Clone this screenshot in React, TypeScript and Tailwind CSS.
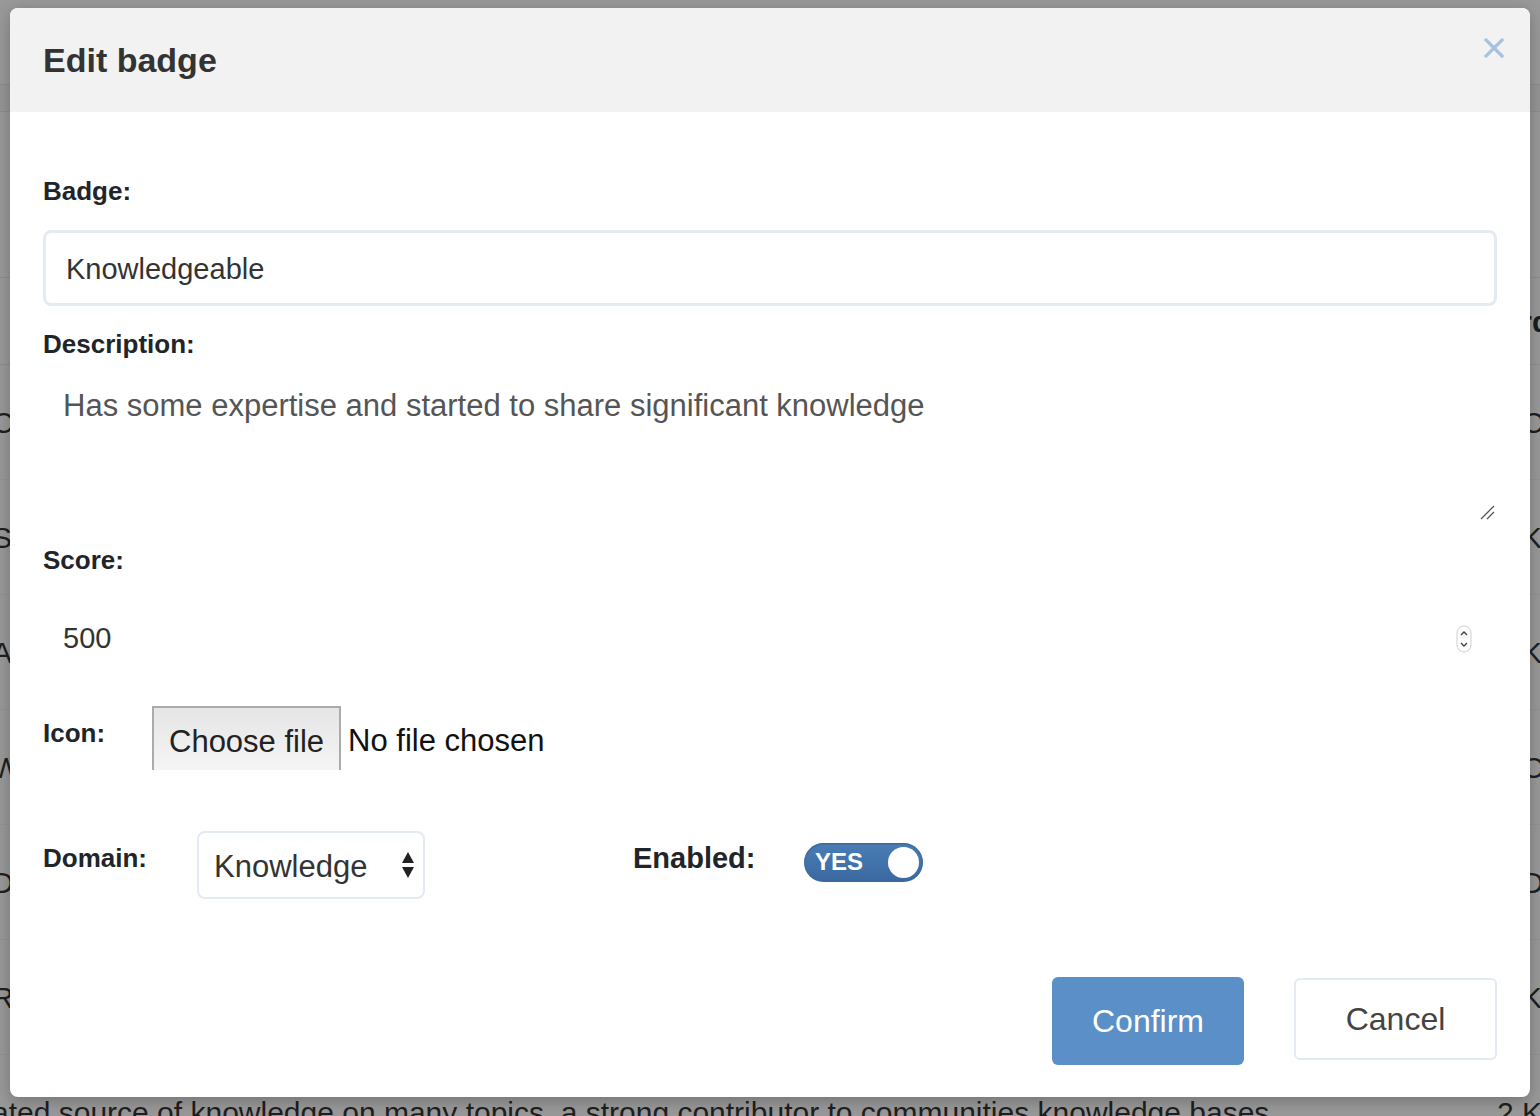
import { useState } from "react";

const FONT = "font-['Liberation_Sans',Arial,sans-serif]";

const ROWS = [
  { desc: "Contributes often and helps the community grow", right: "1 Community" },
  { desc: "Shares expertise in a clear and useful manner", right: "2 Knowledge" },
  { desc: "Answers questions in depth with good explanation", right: "2 Knowledge" },
  { desc: "Welcomes new members and encourages discussion", right: "1 Community" },
  { desc: "Default badge given on first sign in", right: "0 Default" },
  { desc: "Recognised for knowledge on a wide range of topic", right: "3 Knowledge" },
  { desc: "ated source of knowledge on many topics, a strong contributor to communities knowledge bases", right: "2 Knowledge" },
];

function Spinner() {
  return (
    <svg width="16" height="28" viewBox="0 0 16 28" className="shrink-0">
      <rect x="1" y="1" width="14" height="26" rx="7" fill="#fff" stroke="#cfcfcf" />
      <path d="M5 10 L8 7 L11 10" fill="none" stroke="#444" strokeWidth="1.4" />
      <path d="M5 18 L8 21 L11 18" fill="none" stroke="#444" strokeWidth="1.4" />
    </svg>
  );
}

function Toggle({ on }: { on: boolean }) {
  return (
    <div className="flex h-[39px] w-[119px] items-center justify-between rounded-full bg-gradient-to-b from-[#4a7db6] to-[#3a699f] pl-[11px] pr-[4px] shadow-[inset_0_1px_2px_rgba(0,0,0,0.25)]">
      <span className="text-[24px] font-bold leading-none text-white">{on ? "YES" : "NO"}</span>
      <span className="h-[31px] w-[31px] rounded-full bg-white" />
    </div>
  );
}

function EditBadgeModal() {
  const [name, setName] = useState("Knowledgeable");
  const [desc, setDesc] = useState("Has some expertise and started to share significant knowledge");
  const [score, setScore] = useState("500");

  return (
    <div className="absolute left-[10px] top-[8px] flex h-[1089px] w-[1520px] flex-col overflow-hidden rounded-[8px] bg-white shadow-[0_4px_16px_rgba(0,0,0,0.25)]">
      {/* header */}
      <div className="flex h-[104px] shrink-0 items-center justify-between bg-[#f2f2f2] pl-[33px] pr-[26px]">
        <h1 className="text-[34px] font-bold text-[#333]">Edit badge</h1>
        <svg width="20" height="20" viewBox="0 0 20 20" className="mb-[24px]">
          <path d="M2 2 L18 18 M18 2 L2 18" stroke="#a7c2e0" strokeWidth="3.2" strokeLinecap="square" />
        </svg>
      </div>

      {/* body */}
      <div className="flex flex-col px-[33px] pt-[60px]">
        <label className="text-[26px] font-bold leading-[39px] text-[#212529]">Badge:</label>
        <input
          value={name}
          onChange={(e) => setName(e.target.value)}
          className="mt-[19px] h-[76px] w-full rounded-[8px] border-[3px] border-[#e3eaf1] px-[20px] pt-[2px] text-[29px] text-[#333] outline-none"
        />

        <label className="mt-[19px] text-[26px] font-bold leading-[39px] text-[#212529]">Description:</label>
        <div className="relative mt-[6px]">
          <textarea
            value={desc}
            onChange={(e) => setDesc(e.target.value)}
            className="block h-[155px] w-full resize-none px-[20px] pt-[15px] text-[31px] leading-[42px] text-[#555] outline-none"
          />
          {/* resize grip */}
          <svg width="16" height="16" viewBox="0 0 16 16" className="pointer-events-none absolute bottom-[4px] right-[1px]">
            <path d="M1 14 L14 1 M7 14 L14 7" stroke="#555" strokeWidth="1.3" />
          </svg>
        </div>

        <label className="mt-[16px] text-[26px] font-bold leading-[39px] text-[#212529]">Score:</label>
        <div className="mt-[27px] flex h-[64px] items-center pl-[20px] pr-[25px]">
          <input
            value={score}
            onChange={(e) => setScore(e.target.value)}
            className="flex-1 text-[29px] text-[#333] outline-none"
          />
          <Spinner />
        </div>

        <div className="mt-[35px] flex items-start">
          <label className="w-[109px] pt-[8px] text-[26px] font-bold leading-[39px] text-[#212529]">Icon:</label>
          <div className="flex items-center">
            <div className="flex h-[64px] items-center border-x-2 border-t-2 border-[#ababab] bg-gradient-to-b from-[#e5e5e5] to-[#f5f5f5] px-[15px] pt-[6px] text-[31px] text-[#222]">
              Choose file
            </div>
            <span className="ml-[7px] pt-[6px] text-[31px] text-[#111]">No file chosen</span>
          </div>
        </div>

        <div className="mt-[61px] flex items-center">
          <label className="mt-[-14px] w-[154px] text-[26px] font-bold leading-[39px] text-[#212529]">Domain:</label>
          <div className="flex h-[68px] w-[228px] items-center justify-between rounded-[8px] border-2 border-[#e3eaf1] pl-[15px] pr-[8px] text-[31px] text-[#333]">
            <span className="pt-[4px]">Knowledge</span>
            <svg width="14" height="30" viewBox="0 0 14 30">
              <path d="M7 2 L13 13 L1 13 Z" fill="#222" />
              <path d="M1 17 L13 17 L7 28 Z" fill="#222" />
            </svg>
          </div>
          <label className="ml-[208px] mt-[-14px] w-[171px] text-[29px] font-bold leading-[39px] text-[#212529]">Enabled:</label>
          <div className="mt-[-6px]">
            <Toggle on />
          </div>
        </div>

        <div className="mt-[78px] flex items-start justify-end gap-[50px]">
          <button className="h-[88px] w-[192px] rounded-[6px] bg-[#5b8fc7] text-[32px] text-white">Confirm</button>
          <button className="mt-[1px] h-[82px] w-[203px] rounded-[6px] border-2 border-[#e3eaf1] bg-white text-[32px] text-[#444]">
            Cancel
          </button>
        </div>
      </div>
    </div>
  );
}

export default function App() {
  return (
    <div className={`relative h-[1116px] w-[1540px] overflow-hidden bg-[#999] ${FONT}`}>
      {/* page behind the overlay */}
      <div className="flex flex-col">
        <div className="h-[84px]" />
        <div className="h-[28px] border-y border-[#8d8d8d] bg-[#959595]" />
        <div className="h-[166px] border-b border-[#8d8d8d]" />
        <div className="grid h-[87px] grid-cols-[1497px_1fr] items-center border-b border-[#8d8d8d]">
          <span className="pl-[20px] text-[30px] font-bold text-[#1c1c1c]">Description</span>
          <span className="text-[30px] font-bold text-[#1c1c1c]">Order</span>
        </div>
        {ROWS.map((r, i) => (
          <div key={i} className="grid h-[115px] grid-cols-[1497px_1fr] items-center border-b border-[#939393]">
            <span className="-ml-[8px] whitespace-nowrap text-[30px] text-[#1f1f1f]">{r.desc}</span>
            <span className="whitespace-nowrap text-[30px] text-[#1f1f1f]">{r.right}</span>
          </div>
        ))}
      </div>

      <EditBadgeModal />
    </div>
  );
}
